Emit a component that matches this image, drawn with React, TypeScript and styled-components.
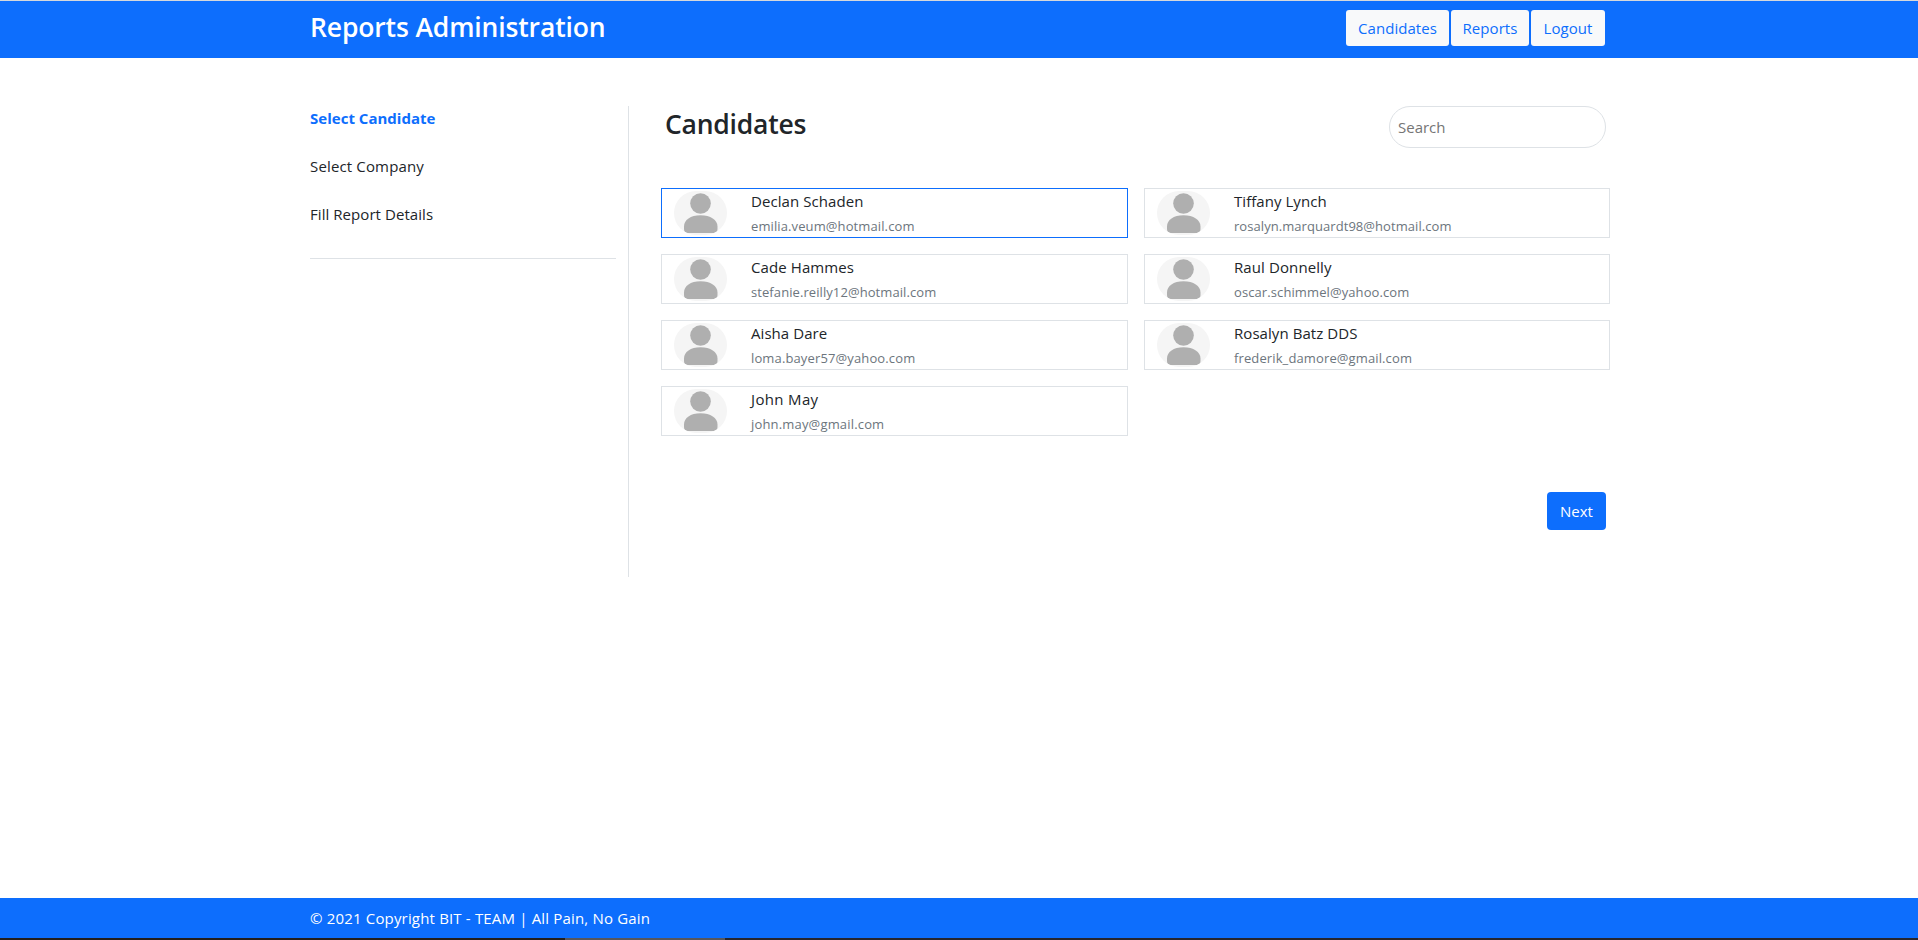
import React, { useState } from "react";
import styled, { createGlobalStyle } from "styled-components";

const blue = "#0d6efd";
const line = "#dee2e6";

const GlobalStyle = createGlobalStyle`
  *, *::before, *::after { box-sizing: border-box; }
  body {
    margin: 0;
    background: #fff;
    color: #212529;
    font: 400 15px/24px "Open Sans", "Segoe UI", sans-serif;
  }
  h1, h2, p, ul { margin: 0; padding: 0; }
  button, input { font: inherit; }
`;

const Page = styled.div`
  display: flex;
  flex-direction: column;
  height: 940px;
`;

const Container = styled.div`
  width: 1320px;
  margin: 0 auto;
  padding: 0 12px;
`;

const Header = styled.header`
  height: 58px;
  background: ${blue};
  border-top: 1px solid #d5d8dc;
`;

const HeaderRow = styled(Container)`
  display: flex;
  justify-content: space-between;
  align-items: flex-start;
  padding: 9px 14px 0 11px;
`;

const Brand = styled.h1`
  color: #fff;
  font-size: 26.5px;
  line-height: 34px;
  font-weight: 600;
  letter-spacing: -0.14px;
`;

const Nav = styled.nav`
  display: flex;
  gap: 2px;
`;

const NavButton = styled.button<{ $width: number }>`
  width: ${(p) => p.$width}px;
  height: 36px;
  padding: 0;
  border: 0;
  border-radius: 3px;
  background: #f8f9fa;
  color: ${blue};
  letter-spacing: 0.05px;
  white-space: nowrap;
`;

const Main = styled(Container)`
  display: flex;
  flex: 1;
  align-items: flex-start;
  padding: 48px 9px 0 11px;
`;

const Sidebar = styled.aside`
  width: 319px;
  height: 471px;
  padding-right: 12px;
  border-right: 1px solid ${line};
`;

const Steps = styled.ul`
  display: flex;
  flex-direction: column;
  gap: 24px;
  height: 153px;
  list-style: none;
  border-bottom: 1px solid ${line};
`;

const Step = styled.li<{ $active?: boolean; $spacing: number }>`
  letter-spacing: ${(p) => p.$spacing}px;
  color: ${(p) => (p.$active ? blue : "#212529")};
  font-weight: ${(p) => (p.$active ? 700 : 400)};
`;

const Content = styled.section`
  flex: 1;
  padding-left: 32px;
`;

const ContentHead = styled.div`
  display: flex;
  justify-content: space-between;
  padding: 0 4px;
  height: 82px;
`;

const Title = styled.h2`
  font-size: 26.5px;
  line-height: 37px;
  font-weight: 600;
  letter-spacing: -0.22px;
`;

const Search = styled.input`
  width: 217px;
  height: 42px;
  padding: 0 8px;
  border: 1px solid ${line};
  border-radius: 21px;
  outline: 0;
  &::placeholder { color: #757575; opacity: 1; }
`;

const Grid = styled.div`
  display: grid;
  grid-template-columns: 467px 466px;
  gap: 16px;
`;

const Card = styled.article<{ $active: boolean }>`
  display: flex;
  height: 50px;
  padding: 2px 12px;
  border: 1px solid ${(p) => (p.$active ? blue : line)};
`;

const Picture = styled.svg`
  width: 53px;
  height: 44px;
  margin-right: 24px;
  border-radius: 25px;
`;

const Name = styled.p<{ $spacing: number }>`
  line-height: 20px;
  letter-spacing: ${(p) => p.$spacing}px;
`;

const Email = styled.p<{ $spacing: number }>`
  color: #6c757d;
  font-size: 13px;
  line-height: 30px;
  letter-spacing: ${(p) => p.$spacing}px;
`;

const Actions = styled.div`
  display: flex;
  justify-content: flex-end;
  padding: 56px 4px 0 0;
`;

const NextButton = styled.button`
  width: 59px;
  height: 38px;
  padding: 0;
  border: 0;
  border-radius: 4px;
  background: ${blue};
  color: #fff;
`;

const Footer = styled.footer`
  height: 42px;
  background: ${blue};
  color: #fff;
  line-height: 40px;
`;

const Copyright = styled(Container)`
  height: 40px;
  padding-left: 11px;
  letter-spacing: 0.17px;
`;

const BottomEdge = styled.div`
  height: 2px;
  background: linear-gradient(90deg, #231f1c 565px, #57575c 565px, #57575c 725px, #26262e 725px);
`;

const Avatar = () => (
  <Picture viewBox="0 0 53 44">
    <rect width="53" height="44" fill="#f5f5f5" />
    <circle cx="26.5" cy="12.5" r="10.3" fill="#afafaf" />
    <path d="M10 38V35.500C10 29 16.500 24.300 26.500 24.300S43.500 29 43.500 35.500V38Q43.500 42 39.500 42H14Q10 42 10 38Z" fill="#afafaf" />
  </Picture>
);

const people = [
  { name: "Declan Schaden", email: "emilia.veum@hotmail.com", ns: 0.08, es: 0.11 },
  { name: "Tiffany Lynch", email: "rosalyn.marquardt98@hotmail.com", ns: 0.05, es: 0.06 },
  { name: "Cade Hammes", email: "stefanie.reilly12@hotmail.com", ns: 0.09, es: 0.08 },
  { name: "Raul Donnelly", email: "oscar.schimmel@yahoo.com", ns: 0.1, es: 0.1 },
  { name: "Aisha Dare", email: "loma.bayer57@yahoo.com", ns: 0.06, es: 0.13 },
  { name: "Rosalyn Batz DDS", email: "frederik_damore@gmail.com", ns: 0.06, es: 0.12 },
  { name: "John May", email: "john.may@gmail.com", ns: 0.35, es: 0.17 },
];

export default function App() {
  const [selected, setSelected] = useState(0);
  const [query, setQuery] = useState("");
  return (
    <Page>
      <GlobalStyle />
      <Header>
        <HeaderRow>
          <Brand>Reports Administration</Brand>
          <Nav>
            <NavButton $width={103}>Candidates</NavButton>
            <NavButton $width={78}>Reports</NavButton>
            <NavButton $width={74}>Logout</NavButton>
          </Nav>
        </HeaderRow>
      </Header>
      <Main>
        <Sidebar>
          <Steps>
            <Step $active $spacing={0.02}>Select Candidate</Step>
            <Step $spacing={0.15}>Select Company</Step>
            <Step $spacing={0.06}>Fill Report Details</Step>
          </Steps>
        </Sidebar>
        <Content>
          <ContentHead>
            <Title>Candidates</Title>
            <Search placeholder="Search" value={query} onChange={(e) => setQuery(e.target.value)} />
          </ContentHead>
          <Grid>
            {people.map((p, i) => (
              <Card key={p.name} $active={i === selected} onClick={() => setSelected(i)}>
                <Avatar />
                <div>
                  <Name $spacing={p.ns}>{p.name}</Name>
                  <Email $spacing={p.es}>{p.email}</Email>
                </div>
              </Card>
            ))}
          </Grid>
          <Actions>
            <NextButton>Next</NextButton>
          </Actions>
        </Content>
      </Main>
      <Footer>
        <Copyright>© 2021 Copyright BIT - TEAM | All Pain, No Gain</Copyright>
        <BottomEdge />
      </Footer>
    </Page>
  );
}
